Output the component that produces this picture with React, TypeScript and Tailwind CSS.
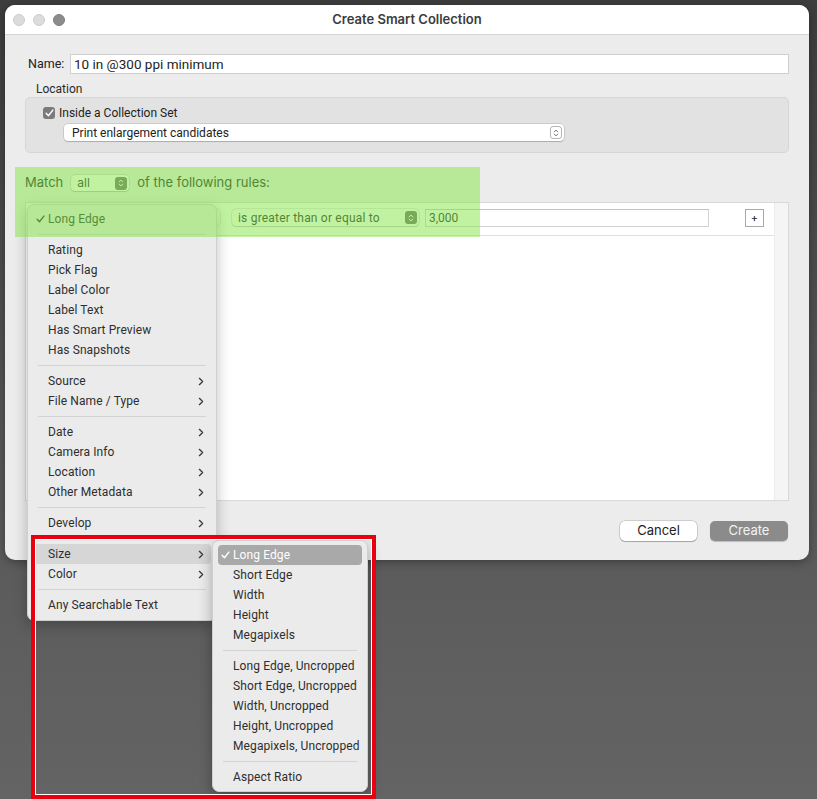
import React from 'react';

const Check = ({ className = '' }: { className?: string }) => (
    <svg viewBox="0 0 10 9" className={`w-[9px] h-[8px] ${className}`} fill="none" stroke="currentColor" strokeWidth="1.6" strokeLinecap="round" strokeLinejoin="round">
        <path d="M1.2 4.8 L3.8 7.6 L8.8 1.2" />
    </svg>
);

const Chevron = () => (
    <svg viewBox="0 0 6 10" className="w-[6px] h-[9px] text-[#3a3a3a]" fill="none" stroke="currentColor" strokeWidth="1.5" strokeLinecap="round" strokeLinejoin="round">
        <path d="M1.2 1.5 L4.8 5 L1.2 8.5" />
    </svg>
);

const Stepper = ({ dark }: { dark?: boolean }) => (
    <div
        className={`w-[12px] h-[13px] rounded-[3px] flex items-center justify-center ${dark ? 'bg-[#6e6e6e] text-white' : 'bg-white border border-[#b5b5b5] text-[#777]'
            }`}
    >
        <svg viewBox="0 0 8 10" className="w-[6px] h-[8px]" fill="none" stroke="currentColor" strokeWidth="1.3" strokeLinecap="round" strokeLinejoin="round">
            <path d="M1.5 3.5 L4 1.2 L6.5 3.5" />
            <path d="M1.5 6.5 L4 8.8 L6.5 6.5" />
        </svg>
    </div>
);

const Sep = () => (
    <div className="h-[11px] flex items-center px-[10px]">
        <div className="h-px w-full bg-[#d3d3d3]" />
    </div>
);

type Item = { label: string; sub?: boolean; checked?: boolean; hover?: boolean } | 'sep';

const mainItems: Item[] = [
    { label: 'Long Edge', checked: true },
    'sep',
    { label: 'Rating' },
    { label: 'Pick Flag' },
    { label: 'Label Color' },
    { label: 'Label Text' },
    { label: 'Has Smart Preview' },
    { label: 'Has Snapshots' },
    'sep',
    { label: 'Source', sub: true },
    { label: 'File Name / Type', sub: true },
    'sep',
    { label: 'Date', sub: true },
    { label: 'Camera Info', sub: true },
    { label: 'Location', sub: true },
    { label: 'Other Metadata', sub: true },
    'sep',
    { label: 'Develop', sub: true },
    'sep',
    { label: 'Size', sub: true, hover: true },
    { label: 'Color', sub: true },
    'sep',
    { label: 'Any Searchable Text' },
];

const sizeItems: Item[] = [
    { label: 'Long Edge', checked: true },
    { label: 'Short Edge' },
    { label: 'Width' },
    { label: 'Height' },
    { label: 'Megapixels' },
    'sep',
    { label: 'Long Edge, Uncropped' },
    { label: 'Short Edge, Uncropped' },
    { label: 'Width, Uncropped' },
    { label: 'Height, Uncropped' },
    { label: 'Megapixels, Uncropped' },
    'sep',
    { label: 'Aspect Ratio' },
];

const MenuList = ({ items, activeDark }: { items: Item[]; activeDark?: boolean }) => (
    <>
        {items.map((it, i) => {
            if (it === 'sep') return <Sep key={i} />;
            const selected = activeDark && it.checked;
            return (
                <div
                    key={i}
                    className={`relative h-[20px] mx-[5px] pl-[15px] pr-[7px] rounded-[4px] flex items-center justify-between whitespace-nowrap font-['Roboto',sans-serif] text-[12px] tracking-[0.1px] ${selected ? 'bg-[#a9a9a9] text-white' : it.hover ? 'bg-[#d6d6d6] text-[#2e2e2e]' : 'text-[#2e2e2e]'
                        }`}
                >
                    {it.checked && (
                        <span className="absolute left-[3px] top-[6px]">
                            <Check />
                        </span>
                    )}
                    <span>{it.label}</span>
                    {it.sub && <Chevron />}
                </div>
            );
        })}
    </>
);

export default function App() {
    return (
        <div className="relative w-[817px] h-[799px] overflow-hidden bg-linear-to-b from-[#3d3d3d] via-[#555555] to-[#646464] font-['Inter',sans-serif] text-[#262626]">
            <div className="pt-[5px] pl-[5px]">
                {/* Dialog window */}
                <div className="w-[804px] h-[555px] rounded-[10px] bg-[#ececec] flex flex-col overflow-hidden shadow-[0_2px_10px_rgba(0,0,0,0.35)]">
                    <div className="h-[30px] shrink-0 bg-white border-b border-[#d4d4d4] grid grid-cols-[80px_1fr_80px] items-center">
                        <div className="flex gap-[8px] pl-[8px]">
                            <div className="w-[12px] h-[12px] rounded-full bg-[#dcdcdc] border border-[#cbcbcb]" />
                            <div className="w-[12px] h-[12px] rounded-full bg-[#dcdcdc] border border-[#cbcbcb]" />
                            <div className="w-[12px] h-[12px] rounded-full bg-[#8c8c8c] border border-[#7f7f7f]" />
                        </div>
                        <div className="text-center text-[13px] font-semibold text-[#3b3b3b]">Create Smart Collection</div>
                        <div />
                    </div>

                    <div className="px-[20px] pt-[19px] flex flex-col font-['Roboto',sans-serif] text-[12px]">
                        <div className="flex items-center h-[20px] pl-[3px]">
                            <span className="w-[42px] text-[12.5px] text-[#222]">Name:</span>
                            <div className="flex-1 h-[20px] bg-white border border-[#cfcfcf] flex items-center px-[3px] text-[13.5px] text-[#1e1e1e]">
                                10 in @300 ppi minimum
                            </div>
                        </div>

                        <div className="mt-[8px] pl-[11px] leading-[14px] text-[#2a2a2a]">Location</div>

                        <div className="mt-[1px] h-[56px] rounded-[5px] bg-[#e2e2e2] border border-[#d6d6d6] flex flex-col">
                            <div className="flex items-center gap-[4px] pl-[17px] pt-[9px] h-[21px]">
                                <div className="w-[12px] h-[12px] rounded-[3px] bg-[#7b7b7b] text-white flex items-center justify-center">
                                    <Check />
                                </div>
                                <span className="text-[#222]">Inside a Collection Set</span>
                            </div>
                            <div className="mt-[5px] ml-[38px] w-[500px] h-[17px] bg-white rounded-[4px] shadow-[0_0_0_0.5px_rgba(0,0,0,0.2),0_1px_1px_rgba(0,0,0,0.15)] flex items-center justify-between pl-[8px] pr-[2px] text-[#222]">
                                <span>Print enlargement candidates</span>
                                <Stepper />
                            </div>
                        </div>

                        <div className="mt-[22px] h-[16px] flex items-center font-['Inter',sans-serif] text-[13px] text-[#222]">
                            <span>Match</span>
                            <div className="ml-[8px] w-[58px] h-[16px] bg-white rounded-[4px] shadow-[0_0_0_0.5px_rgba(0,0,0,0.2),0_1px_1px_rgba(0,0,0,0.15)] flex items-center justify-between pl-[6px] pr-[2px] text-[12px]">
                                <span>all</span>
                                <Stepper dark />
                            </div>
                            <span className="ml-[8px]">of the following rules:</span>
                        </div>

                        <div className="mt-[11px] h-[299px] bg-white border border-[#d9d9d9] flex font-['Inter',sans-serif]">
                            <div className="flex-1 flex flex-col">
                                <div className="h-[33px] border-b border-[#e0e0e0] flex items-start pt-[6px] pl-[4px] pr-[10px]">
                                    <div className="w-[190px] h-[17px] bg-white rounded-[4px] shadow-[0_0_0_0.5px_rgba(0,0,0,0.2)]" />
                                    <div className="ml-[12px] w-[187px] h-[17px] bg-white rounded-[4px] shadow-[0_0_0_0.5px_rgba(0,0,0,0.2),0_1px_1px_rgba(0,0,0,0.15)] flex items-center justify-between pl-[6px] pr-[2px] font-['Roboto',sans-serif] text-[12px] tracking-[0.2px] text-[#222]">
                                        <span>is greater than or equal to</span>
                                        <Stepper dark />
                                    </div>
                                    <div className="ml-[6px] w-[284px] h-[18px] bg-white border border-[#d2d2d2] border-t-[#c4c4c4] flex items-center px-[3px] font-['Roboto',sans-serif] text-[12px] text-[#222]">
                                        3,000
                                    </div>
                                    <div className="ml-auto w-[19px] h-[18px] border border-[#a8a8a8] bg-white flex items-center justify-center text-[11px] leading-none text-[#222]">
                                        +
                                    </div>
                                </div>
                            </div>
                            <div className="w-[14px] bg-[#f5f5f5] border-l border-[#ececec]" />
                        </div>

                        <div className="mt-[20px] flex justify-end gap-[13px] pr-[1px] font-['Inter',sans-serif] text-[13px]">
                            <div className="w-[77px] h-[20px] rounded-[5px] bg-white shadow-[0_0_0_0.5px_rgba(0,0,0,0.25),0_1px_1px_rgba(0,0,0,0.2)] flex items-center justify-center text-[#222]">
                                Cancel
                            </div>
                            <div className="w-[78px] h-[20px] rounded-[5px] bg-[#8b8b8b] shadow-[0_1px_1px_rgba(0,0,0,0.2)] flex items-center justify-center text-[#f2f2f2]">
                                Create
                            </div>
                        </div>
                    </div>
                </div>
            </div>

            {/* Criteria popup menu */}
            <div className="absolute left-[27px] top-[204px] w-[190px] pt-[4px] pb-[5px] rounded-[7px] bg-[#ebebeb] border border-[#cfcfcf] shadow-[0_4px_14px_rgba(0,0,0,0.25)]">
                <MenuList items={mainItems} />
            </div>

            {/* Size submenu */}
            <div className="absolute left-[212px] top-[540px] w-[156px] pt-[4px] pb-[4px] rounded-[7px] bg-[#ebebeb] border border-[#cfcfcf] shadow-[0_4px_14px_rgba(0,0,0,0.3)]">
                <MenuList items={sizeItems} activeDark />
            </div>

            {/* Green annotation highlight */}
            <div className="absolute left-[15px] top-[167px] w-[465px] h-[70px] bg-[#82e646]/50" />

            {/* Red annotation frame */}
            <div className="absolute left-[31px] top-[535px] w-[345px] h-[264px] border-[4px] border-[#e8000e] shadow-[inset_0_0_0_1px_#ffffff]" />
        </div>
    );
}
